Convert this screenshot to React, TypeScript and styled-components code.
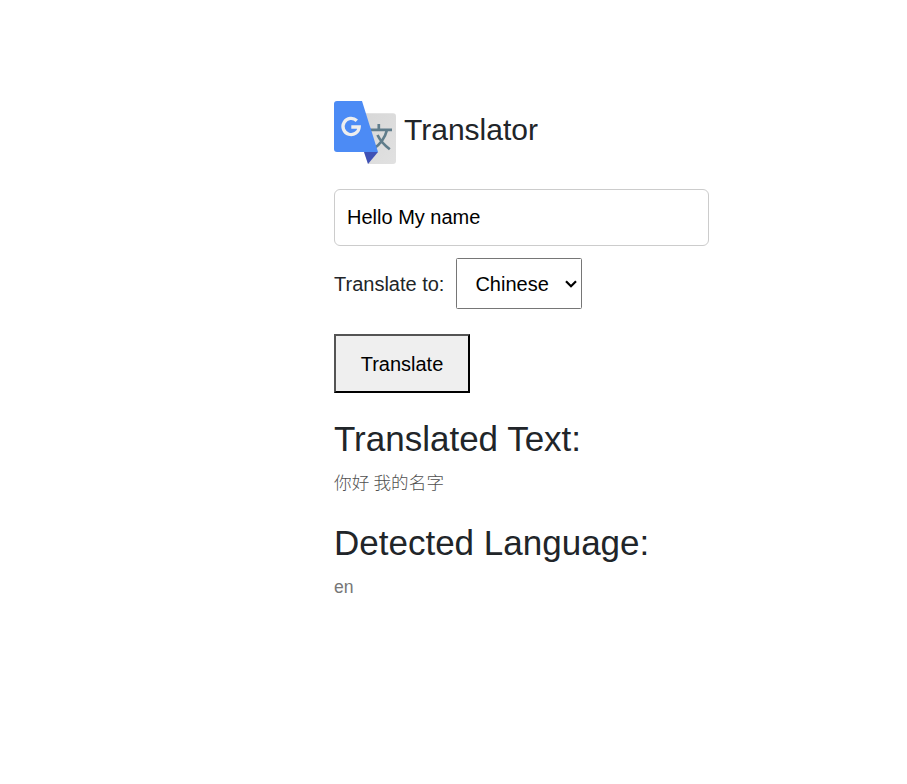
import React from "react";
import styled, { createGlobalStyle } from "styled-components";

const GlobalStyle = createGlobalStyle`
  *, *::before, *::after { box-sizing: border-box; }
  body { margin: 0; background: #fff; color: #212529; font-family: "Liberation Sans", "Noto Sans CJK SC", sans-serif; }
`;
const Page = styled.main`
  width: 375px; margin-left: 334px; padding-top: 100px;
  display: flex; flex-direction: column; align-items: flex-start;
`;
const Brand = styled.header`
  display: flex; align-items: flex-start; gap: 8px; height: 64px;
  svg { display: block; flex: none; }
`;
const BrandName = styled.h1`
  margin: 12px 0 0; font-size: 30px; line-height: 36px; font-weight: 400;
`;
const TextInput = styled.input`
  width: 375px; height: 57px; margin-top: 25px; padding: 0 12px;
  border: 1px solid #ccc; border-radius: 6px; color: #000;
  font: 20px "Liberation Sans", sans-serif; outline: 0;
`;
const LanguageRow = styled.div`
  display: flex; align-items: center; gap: 12px; margin-top: 12px;
`;
const Label = styled.label`font-size: 20px; line-height: 30px;`;
const SelectBox = styled.div`
  position: relative; height: 51px;
  svg { position: absolute; right: 5px; top: 22px; pointer-events: none; }
`;
const Select = styled.select`
  display: block; appearance: none;
  width: 126px; height: 51px; padding: 0 0 0 18px;
  border: 1px solid #767676; border-radius: 1.5px; background: #fff; color: #000;
  font: 20px "Liberation Sans", sans-serif;
`;
const Button = styled.button`
  width: 136px; height: 59px; margin-top: 25px; padding: 2px 0 0;
  border: 2px outset #000; border-radius: 0; background: #efefef; color: #000;
  font: 20px "Liberation Sans", sans-serif;
`;
const Result = styled.section<{ $top: number }>`margin-top: ${p => p.$top}px;`;
const Title = styled.h2`
  margin: 0 0 10px; font-size: 35px; line-height: 42px; font-weight: 400; white-space: nowrap;
`;
const Value = styled.p`
  margin: 0; height: 25px; font-size: 17.6px; line-height: 27px; color: #777;
`;
const ChineseValue = styled(Value)`font-weight: 300; color: #505050; word-spacing: -1px; letter-spacing: 0.1px;`;

const Logo = () => (
  <svg width="62" height="64" viewBox="0 0 62 64">
    <defs>
      <linearGradient id="paper" x1="0" y1="0" x2="1" y2="1">
        <stop offset="0" stopColor="#d6d6d6" />
        <stop offset="1" stopColor="#e1e1e1" />
      </linearGradient>
    </defs>
    <path d="M17 13.3H59q3 0 3 3V61q0 3-3 3H34Z" fill="url(#paper)" />
    <path d="M30 52H44L34 64Z" fill="#3f51b5" />
    <g fill="none" stroke="#607d8b" strokeWidth="2.7"><path d="M35 29.8H58M44.8 24V29.5M53 30Q50 41.5 40 48.5M43.5 35Q47 42.5 55.8 49.3" /></g>
    <path d="M3 1H28L44 52H3q-3 0-3-3V4q0-3 3-3Z" fill="#4c8bf5" />
    <path d="M22.8 20.7A8.1 8.1 0 1 0 25.2 27H17.3" fill="none" stroke="#eee" strokeWidth="3.3" />
  </svg>
);

export default function App() {
  return (
    <>
      <GlobalStyle />
      <Page>
        <Brand><Logo /><BrandName>Translator</BrandName></Brand>
        <TextInput defaultValue="Hello My name" />
        <LanguageRow>
          <Label htmlFor="language">Translate to:</Label>
          <SelectBox>
            <Select id="language"><option>Chinese</option></Select>
            <svg width="12" height="8" viewBox="0 0 12 8" fill="none" stroke="#000" strokeWidth="2.2"><path d="M1 1.2L6 6.2L11 1.2" /></svg>
          </SelectBox>
        </LanguageRow>
        <Button>Translate</Button>
        <Result $top={25}><Title>Translated Text:</Title><ChineseValue lang="zh-CN">你好 我的名字</ChineseValue></Result>
        <Result $top={27}><Title>Detected Language:</Title><Value>en</Value></Result>
      </Page>
    </>
  );
}
